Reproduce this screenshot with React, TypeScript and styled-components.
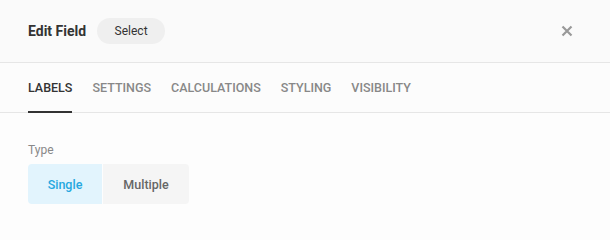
import React, { useState } from "react";
import styled, { createGlobalStyle } from "styled-components";

const GlobalStyle = createGlobalStyle`
  html, body {
    margin: 0;
    padding: 0;
    background: #fdfdfd;
    font-family: Roboto, "Liberation Sans", Arial, sans-serif;
  }
`;

const Panel = styled.div`
  width: 610px;
  height: 230px;
  background: #fdfdfd;
  display: flex;
  flex-direction: column;
`;

const Header = styled.div`
  height: 63px;
  box-sizing: border-box;
  display: flex;
  align-items: center;
  padding: 0 37px 0 28px;
  background: #fafafa;
  border-bottom: 1px solid #e6e6e6;
`;

const Title = styled.h2`
  margin: 0;
  font-size: 14px;
  font-weight: 700;
  color: #333;
`;

const Pill = styled.span`
  margin-left: 11px;
  height: 26px;
  width: 68px;
  border-radius: 13px;
  background: #efefef;
  color: #333;
  font-size: 12px;
  display: inline-flex;
  align-items: center;
  justify-content: center;
`;

const Close = styled.button`
  margin-left: auto;
  border: 0;
  background: none;
  padding: 0;
  width: 12px;
  height: 12px;
  display: flex;
  cursor: pointer;
`;

const Tabs = styled.nav`
  height: 50px;
  box-sizing: border-box;
  display: flex;
  gap: 20px;
  padding: 0 28px;
  background: #fcfcfc;
  border-bottom: 1px solid #e6e6e6;
`;

const Tab = styled.div<{ $active?: boolean }>`
  position: relative;
  display: flex;
  align-items: center;
  font-size: 12.5px;
  font-weight: 500;
  color: ${(p) => (p.$active ? "#333" : "#888")};
  cursor: pointer;
  &::after {
    content: "";
    display: ${(p) => (p.$active ? "block" : "none")};
    position: absolute;
    left: 0;
    right: 0;
    bottom: -1px;
    height: 2px;
    background: #333;
  }
`;

const Body = styled.div`
  padding: 30px 28px 0;
`;

const Label = styled.div`
  font-size: 12px;
  color: #888;
  margin-bottom: 7px;
`;

const Segments = styled.div`
  display: inline-flex;
  gap: 1px;
  border-radius: 4px;
  overflow: hidden;
`;

const Segment = styled.button<{ $active?: boolean; $w: number }>`
  width: ${(p) => p.$w}px;
  height: 40px;
  border: 0;
  font-family: inherit;
  font-size: 12.5px;
  font-weight: 500;
  background: ${(p) => (p.$active ? "#e2f4fd" : "#f5f5f5")};
  color: ${(p) => (p.$active ? "#26a8e0" : "#666")};
  cursor: pointer;
`;

const tabs = ["LABELS", "SETTINGS", "CALCULATIONS", "STYLING", "VISIBILITY"];

export default function App() {
  const [tab, setTab] = useState("LABELS");
  const [type, setType] = useState("Single");
  return (
    <Panel>
      <GlobalStyle />
      <Header>
        <Title>Edit Field</Title>
        <Pill>Select</Pill>
        <Close aria-label="Close">
          <svg width="12" height="12" viewBox="0 0 12 12">
            <path d="M1.5 1.5 L10.5 10.5 M10.5 1.5 L1.5 10.5" stroke="#999" strokeWidth="2.2" />
          </svg>
        </Close>
      </Header>
      <Tabs>
        {tabs.map((t) => (
          <Tab key={t} $active={t === tab} onClick={() => setTab(t)}>
            {t}
          </Tab>
        ))}
      </Tabs>
      <Body>
        <Label>Type</Label>
        <Segments>
          <Segment $w={74} $active={type === "Single"} onClick={() => setType("Single")}>
            Single
          </Segment>
          <Segment $w={86} $active={type === "Multiple"} onClick={() => setType("Multiple")}>
            Multiple
          </Segment>
        </Segments>
      </Body>
    </Panel>
  );
}
